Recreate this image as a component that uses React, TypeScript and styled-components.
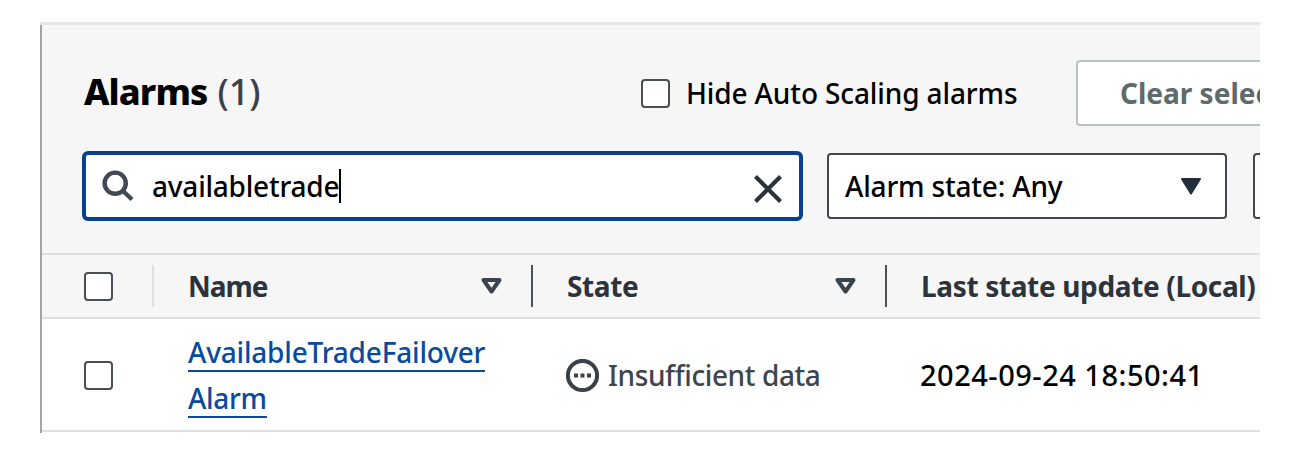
import React from "react";
import styled, { createGlobalStyle } from "styled-components";

const GlobalStyle = createGlobalStyle`
  *, *::before, *::after { box-sizing: border-box; }
  body {
    margin: 0;
    background: #fff;
    color: #000;
    font-family: "Noto Sans", "Open Sans", sans-serif;
    font-size: 28px;
    font-weight: 500;
    overflow: hidden;
  }
`;

const Page = styled.main`
  padding: 22px 40px 21px;
  height: 454px;
`;

const Panel = styled.section`
  height: 411px;
  overflow: hidden;
  border-top: 3px solid #e6e6e6;
  background: #fff;
  display: flex;
`;

const PanelEdge = styled.div`
  flex: none;
  width: 2px;
  background: #a2a5a8;
`;

const PanelBody = styled.div`
  flex: none;
  width: 1600px;
`;

const Label = styled.span<{ $track?: number; $weight?: number; $color?: string; $size?: number }>`
  flex: none;
  white-space: nowrap;
  line-height: 40px;
  letter-spacing: ${(p) => p.$track ?? 0}px;
  font-weight: ${(p) => p.$weight ?? 500};
  color: ${(p) => p.$color ?? "#000"};
  font-size: ${(p) => p.$size ?? 28}px;
`;

const HeadLabel = styled(Label).attrs({ $weight: 700, $color: "#2d333b" })``;

const ValueLabel = styled(Label)`
  padding-bottom: 1px;
`;

const Header = styled.header`
  height: 228px;
  padding: 35px 0 0 40px;
  background: #f6f6f6;
`;

const TitleRow = styled.div`
  display: flex;
  align-items: center;
  height: 66px;
`;

const Title = styled.h2`
  display: flex;
  gap: 10px;
  width: 559px;
  margin: 0;
  padding: 0 0 3px 2px;
  font-size: inherit;
`;

const Checkbox = styled.span.attrs({ role: "checkbox", "aria-checked": false })`
  flex: none;
  width: 29px;
  height: 29px;
  border: 2px solid #4a4e55;
  border-radius: 4px;
  background: #fff;
`;

const Toggle = styled.label`
  display: flex;
  align-items: center;
  gap: 16px;
  width: 435px;
`;

const ClearButton = styled.button`
  display: flex;
  align-items: center;
  width: 280px;
  height: 66px;
  padding: 0 42px;
  border: 2px solid #b9c3c3;
  border-radius: 4px;
  background: #fff;
  font: inherit;
`;

const FilterRow = styled.div`
  display: flex;
  align-items: center;
  gap: 24px;
  margin-top: 25px;
  height: 70px;
`;

const SearchBox = styled.div`
  flex: none;
  display: flex;
  align-items: center;
  width: 721px;
  height: 70px;
  padding: 0 16px 0 16px;
  border: 4px solid #09418e;
  border-radius: 6px;
  background: #fff;
`;

const SearchIcon = styled.svg`
  flex: none;
  width: 32px;
  height: 32px;
  margin-right: 18px;
`;

const Caret = styled.i`
  width: 2px;
  height: 34px;
  margin: 0 auto 0 0;
  background: #000;
`;

const CloseIcon = styled.svg`
  flex: none;
  width: 30px;
  height: 30px;
  margin-top: 5px;
`;

const Select = styled.div<{ $gap?: number }>`
  flex: none;
  display: flex;
  align-items: center;
  justify-content: space-between;
  width: 400px;
  height: 66px;
  margin-right: ${(p) => p.$gap ?? 0}px;
  padding: 0 23px 0 16px;
  border: 2px solid #44464e;
  border-radius: 4px;
  background: #fff;
`;

const Arrow = styled.svg`
  flex: none;
  width: 22px;
  height: 18px;
`;

const Row = styled.div<{ $head?: boolean }>`
  display: grid;
  grid-template-columns: 112px 379px 354px 755px;
  height: ${(p) => (p.$head ? 66 : 113)}px;
  padding-top: ${(p) => (p.$head ? 0 : 2)}px;
  border-top: ${(p) => (p.$head ? 2 : 0)}px solid #dedfe0;
  border-bottom: 2px solid #dedfe0;
  background: ${(p) => (p.$head ? "#f6f6f6" : "#fff")};
`;

const Cell = styled.div<{ $pad: number; $divider?: string }>`
  display: flex;
  align-items: center;
  justify-content: space-between;
  padding-left: ${(p) => p.$pad}px;
  &::after {
    content: "";
    display: ${(p) => (p.$divider ? "block" : "none")};
    width: 2px;
    height: 42px;
    background: ${(p) => p.$divider};
  }
`;

const PlainCell = styled(Cell)`
  justify-content: flex-start;
`;

const SortIcon = styled(Arrow)`
  margin-left: auto;
  margin-right: 29px;
`;

const Link = styled.a`
  color: #0a4a9c;
  white-space: nowrap;
`;

const LinkLine = styled.span<{ $track: number }>`
  display: block;
  width: fit-content;
  height: 38px;
  margin-bottom: 8px;
  line-height: 37px;
  border-bottom: 2px solid #0a4a9c;
  letter-spacing: ${(p) => p.$track}px;
  &:last-child { margin-bottom: 0; }
`;

const StatusIcon = styled.svg`
  flex: none;
  width: 34px;
  height: 34px;
  margin-right: 8px;
`;

const Sort = () => (
  <SortIcon viewBox="0 0 22 18">
    <path d="M3.5 3H19.5L11.5 14.5Z" fill="none" stroke="#3b434c" strokeWidth="4" strokeLinejoin="round" />
  </SortIcon>
);

export default function App() {
  return (
    <Page>
      <GlobalStyle />
      <Panel>
        <PanelEdge />
        <PanelBody>
          <Header>
            <TitleRow>
              <Title>
                <Label $weight={800} $size={36} $track={-0.9}>Alarms</Label>
                <Label $size={36} $color="#3a4049">(1)</Label>
              </Title>
              <Toggle>
                <Checkbox />
                <Label $track={-0.12}>Hide Auto Scaling alarms</Label>
              </Toggle>
              <ClearButton>
                <Label $weight={700} $color="#5f6b6b">Clear selection</Label>
              </ClearButton>
            </TitleRow>
            <FilterRow>
              <SearchBox>
                <SearchIcon viewBox="0 0 32 32" fill="none" stroke="#434952" strokeWidth="4.4">
                  <circle cx="13.2" cy="13.2" r="10.6" />
                  <path d="M21 21L30 29.5" />
                </SearchIcon>
                <Label $track={-0.22}>availabletrade</Label>
                <Caret />
                <CloseIcon viewBox="0 0 30 30">
                  <path d="M2.5 2.5L27.5 27.5M27.5 2.5L2.5 27.5" stroke="#2b323b" strokeWidth="4.2" />
                </CloseIcon>
              </SearchBox>
              <Select $gap={2}>
                <Label $track={-0.18}>Alarm state: Any</Label>
                <Arrow viewBox="0 0 22 18">
                  <path d="M2 2H20L11 16.5Z" fill="#242d39" stroke="#242d39" strokeWidth="2" strokeLinejoin="round" />
                </Arrow>
              </Select>
              <Select />
            </FilterRow>
          </Header>
          <Row $head>
            <Cell $pad={42} $divider="#dedfe0"><Checkbox /></Cell>
            <Cell $pad={34} $divider="#4a525b">
              <HeadLabel $track={-1}>Name</HeadLabel><Sort />
            </Cell>
            <Cell $pad={34} $divider="#4a525b">
              <HeadLabel $track={-0.4}>State</HeadLabel><Sort />
            </Cell>
            <PlainCell $pad={34}>
              <HeadLabel $track={-0.35}>Last state update (Local)</HeadLabel>
            </PlainCell>
          </Row>
          <Row>
            <PlainCell $pad={42}><Checkbox /></PlainCell>
            <PlainCell $pad={34}>
              <Link>
                <LinkLine $track={-0.19}>AvailableTradeFailover</LinkLine>
                <LinkLine $track={-0.3}>Alarm</LinkLine>
              </Link>
            </PlainCell>
            <PlainCell $pad={33}>
              <StatusIcon viewBox="0 0 34 34">
                <circle cx="16.5" cy="16.5" r="14.6" fill="none" stroke="#3b4048" strokeWidth="4" />
                <path d="M8 16.5H25" stroke="#3b4048" strokeWidth="4" strokeDasharray="4 2.5" />
              </StatusIcon>
              <ValueLabel $track={-0.4} $color="#3f454d">Insufficient data</ValueLabel>
            </PlainCell>
            <PlainCell $pad={33}>
              <ValueLabel $size={29} $track={0.5}>2024-09-24 18:50:41</ValueLabel>
            </PlainCell>
          </Row>
        </PanelBody>
      </Panel>
    </Page>
  );
}
